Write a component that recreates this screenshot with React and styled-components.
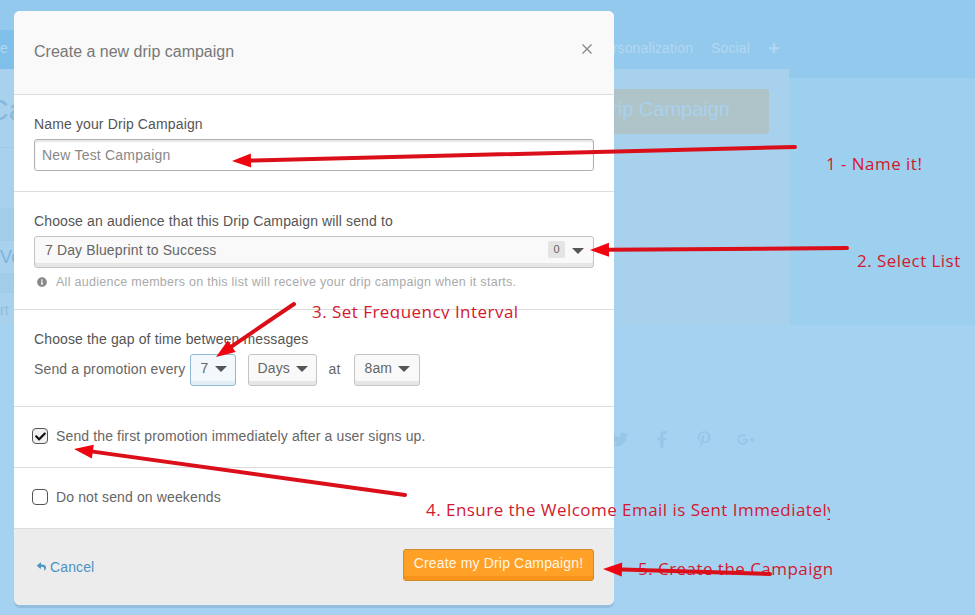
import React from "react";
import styled, { createGlobalStyle } from "styled-components";
import { FaTwitter, FaFacebookF, FaPinterestP, FaGooglePlusG, FaInfoCircle, FaReply, FaCheck, FaPlus } from "react-icons/fa";

const GlobalStyle = createGlobalStyle`
    html, body {
        margin: 0;
        padding: 0;
        background: #a5d2f1;
    }
    * {
        box-sizing: border-box;
    }
`

const Page = styled.div`
    width: 975px;
    height: 615px;
    position: relative;
    overflow: hidden;
    background: #a5d2f1;
    font-family: "Liberation Sans", Arial, sans-serif;
    font-size: 14px;
    letter-spacing: 0.13px;
    color: #555;
`

/* dimmed page behind the modal */
const TopBand = styled.div`
    height: 69px;
    background: #93c9ed;
    display: flex;
    align-items: flex-end;
    color: #b3d7f0;
`

const HomeTab = styled.div`
    width: 40px;
    height: 39px;
    background: #7fbfea;
    line-height: 36px;
`

const NavLinks = styled.div`
    margin-left: auto;
    width: 195px;
    height: 39px;
    margin-right: 195px;
    padding-bottom: 4px;
    display: flex;
    align-items: center;
    gap: 18px;
    white-space: nowrap;
    justify-content: flex-end;
`

const ContentRow = styled.div`
    display: flex;
    height: 256px;
`

const MainPanel = styled.div`
    width: 789px;
    background: #a8d1ed;
    overflow: hidden;
`

const PanelHead = styled.div`
    display: flex;
    justify-content: space-between;
    align-items: flex-start;
`

const TitleBlock = styled.div`
    width: 400px;
    height: 79px;
    border-bottom: 1px solid #9fcbe9;
    padding-top: 21px;
`

const PageTitle = styled.div`
    font-size: 30px;
    line-height: 40px;
    margin-left: -13px;
    color: #86b9de;
`

const GhostButton = styled.div`
    width: 400px;
    height: 45px;
    margin: 20px 20px 0 0;
    background: #afc4c8;
    border-radius: 3px;
    color: #a9d1ed;
    font-size: 20px;
    letter-spacing: 0;
    line-height: 41px;
    text-align: right;
    padding-right: 39px;
`

const TableHead = styled.div`
    width: 400px;
    height: 32px;
    margin-top: 60px;
    background: #a2cdea;
`

const TableRow = styled.div`
    width: 400px;
    height: ${props => props.$h}px;
    line-height: ${props => props.$h}px;
    border-top: 1px solid #9fcbe9;
    color: ${props => props.$c};
    font-size: ${props => props.$fs}px;
    background: ${props => props.$bg || "transparent"};
`

const RightRail = styled.div`
    flex: 1;
    background: #9dcfee;
    border-top: 9px solid #93c9ed;
`

const SocialRow = styled.div`
    display: flex;
    height: 30px;
    margin: 99px 0 0 611px;
    gap: 24px;
    font-size: 17px;
    color: #98c6e8;
    align-items: center;

    & svg {
        width: 18px;
    }
`

/* modal */
const Modal = styled.div`
    position: absolute;
    left: 14px;
    top: 11px;
    width: 600px;
    height: 594px;
    background: #fff;
    border-radius: 6px;
    box-shadow: 0 3px 0 #93bedd;
    overflow: hidden;
    display: flex;
    flex-direction: column;
`

const ModalHeader = styled.div`
    height: 84px;
    background: #f9f9f9;
    border-bottom: 1px solid #ddd;
    padding: 0 20px;
    display: flex;
    align-items: center;
    justify-content: space-between;
`

const ModalTitle = styled.div`
    font-size: 16px;
    letter-spacing: 0;
    color: #777;
    margin-bottom: 2px;
`

const CloseIcon = styled.svg`
    width: 10px;
    height: 10px;
    margin: 0 2px 8px 0;
    stroke: #888;
    stroke-width: 1.4;
`

const Section = styled.div`
    padding: ${props => props.$pad};
    border-bottom: 1px solid #ddd;
`

const CheckSection = styled.div`
    height: 61px;
    border-bottom: 1px solid #ddd;
    padding: 0 18px 2px;
    display: flex;
    align-items: center;
    gap: 8px;
    color: #666;
`

const Label = styled.div`
    line-height: 20px;
    margin-bottom: 5px;
    color: #555;
`

const TextInput = styled.input`
    display: block;
    width: 100%;
    height: 32px;
    border: 1px solid #b0b0b0;
    border-radius: 3px;
    box-shadow: inset 0 2px 2px rgba(0, 0, 0, 0.1);
    padding: 0 7px;
    font: 14px "Liberation Sans", Arial, sans-serif;
    letter-spacing: 0.2px;
    color: #888;
    outline: none;
`

const SelectBox = styled.div`
    height: 32px;
    width: ${props => props.$w ? props.$w + "px" : "100%"};
    margin-left: ${props => props.$ml || 0}px;
    border: 1px solid ${props => props.$active ? "#8fb8d4" : "#c4c4c4"};
    border-radius: 3px;
    background: ${props => props.$active ? "#f2f8fc" : "#f9f9f9"};
    box-shadow: inset 0 -4px 0 ${props => props.$active ? "#e3edf4" : "#e6e6e6"};
    display: flex;
    align-items: center;
    padding: 0 9px 5px ${props => props.$pad}px;
    gap: ${props => props.$gap || 7}px;
    color: #666;
    flex-shrink: 0;
`

const Count = styled.span`
    margin-left: auto;
    width: 17px;
    height: 17px;
    background: #e4e4e4;
    border-radius: 2px;
    font-size: 11px;
    line-height: 17px;
    text-align: center;
    color: #666;
`

const Caret = styled.span`
    width: 0;
    height: 0;
    border-left: 6px solid transparent;
    border-right: 6px solid transparent;
    border-top: 6px solid #555;
    margin-top: 2px;
`

const Hint = styled.div`
    display: flex;
    align-items: center;
    gap: 9px;
    margin: 4px 0 0 3px;
    line-height: 20px;
    font-size: 12.5px;
    letter-spacing: 0.28px;
    color: #aaa;

    & svg {
        color: #888;
        font-size: 10px;
    }
`

const GapRow = styled.div`
    display: flex;
    align-items: center;
    height: 32px;
    color: #666;
`

const RowText = styled.span`
    margin-bottom: 2px;
`

const AtLabel = styled(RowText)`
    width: 13px;
    margin: 0 12px 2px;
`

const Checkbox = styled.span`
    width: 16px;
    height: 16px;
    border: 1.5px solid #555;
    border-radius: 4px;
    background: ${props => props.$checked ? "#f0f0f0" : "#fff"};
    display: flex;
    align-items: center;
    justify-content: center;
    color: #111;
    font-size: 11px;
    flex-shrink: 0;
`

const Footer = styled.div`
    flex: 1;
    background: #ececec;
    display: flex;
    align-items: center;
    justify-content: space-between;
    padding: 0 20px 0 23px;
`

const CancelLink = styled.a`
    color: #4a93c4;
    display: flex;
    align-items: center;
    gap: 4px;

    & svg {
        font-size: 9px;
        margin-bottom: 2px;
    }
`

const CreateButton = styled.button`
    width: 191px;
    height: 32px;
    border: 1px solid #cf8a2a;
    border-radius: 3px;
    background: #ffa126;
    box-shadow: inset 0 -4px 0 #f7931a;
    color: #fff6e6;
    font: 14px "Liberation Sans", Arial, sans-serif;
    letter-spacing: 0.16px;
    padding: 0 0 5px;
    margin-bottom: 4px;
`

/* annotations on top of the screenshot */
const Note = styled.div`
    position: absolute;
    left: ${props => props.$x}px;
    top: ${props => props.$y}px;
    width: ${props => props.$w}px;
    height: ${props => props.$h || 26}px;
    overflow: hidden;
    white-space: nowrap;
    font-family: "Open Sans", sans-serif;
    font-size: 17px;
    line-height: 24px;
    letter-spacing: 0.46px;
    color: #d2192f;
`

const ArrowLayer = styled.svg`
    position: absolute;
    left: 0;
    top: 0;
    width: 975px;
    height: 615px;
    pointer-events: none;
`

const arrows = [
    [795, 147, 232, 161],
    [847, 248, 590, 250],
    [294, 304, 216, 357],
    [405, 495, 74, 449],
    [770, 574, 603, 569],
];

function Arrow({ from, to }) {
    // head is a triangle laid along the line direction
    const dx = from[0] - to[0];
    const dy = from[1] - to[1];
    const len = Math.hypot(dx, dy);
    const ux = dx / len;
    const uy = dy / len;
    const bx = to[0] + ux * 19;
    const by = to[1] + uy * 19;
    const head = `${to[0]},${to[1]} ${bx - uy * 7},${by + ux * 7} ${bx + uy * 7},${by - ux * 7}`;

    return (
        <g>
            <line x1={from[0]} y1={from[1]} x2={bx} y2={by} stroke="#da0f1a" strokeWidth="4" strokeLinecap="round" />
            <polygon points={head} fill="#ee0510" />
        </g>
    );
}

export default function App() {
    return (
        <Page>
            <GlobalStyle />

            <TopBand>
                <HomeTab>e</HomeTab>
                <NavLinks>
                    <span>rsonalization</span>
                    <span>Social</span>
                    <FaPlus size={12} />
                </NavLinks>
            </TopBand>
            <ContentRow>
                <MainPanel>
                    <PanelHead>
                        <TitleBlock>
                            <PageTitle>Ca</PageTitle>
                        </TitleBlock>
                        <GhostButton>rip Campaign</GhostButton>
                    </PanelHead>
                    <TableHead />
                    <TableRow $h={33} $c="#7db3de" $fs={18}>Ve</TableRow>
                    <TableRow $h={19} $c="#8dbde0" $fs={14} $bg="#a2cdea" />
                    <TableRow $h={34} $c="#8dbde0" $fs={14}>rt</TableRow>
                </MainPanel>
                <RightRail />
            </ContentRow>
            <SocialRow>
                <FaTwitter />
                <FaFacebookF />
                <FaPinterestP />
                <FaGooglePlusG />
            </SocialRow>

            <Modal>
                <ModalHeader>
                    <ModalTitle>Create a new drip campaign</ModalTitle>
                    <CloseIcon viewBox="0 0 10 10">
                        <path d="M0.5 0.5 L9.5 9.5 M9.5 0.5 L0.5 9.5" />
                    </CloseIcon>
                </ModalHeader>

                <Section $pad="19px 20px 20px">
                    <Label>Name your Drip Campaign</Label>
                    <TextInput defaultValue="New Test Campaign" />
                </Section>

                <Section $pad="19px 20px 17px">
                    <Label>Choose an audience that this Drip Campaign will send to</Label>
                    <SelectBox $pad={10}>
                        7 Day Blueprint to Success
                        <Count>0</Count>
                        <Caret />
                    </SelectBox>
                    <Hint>
                        <FaInfoCircle />
                        All audience members on this list will receive your drip campaign when it starts.
                    </Hint>
                </Section>

                <Section $pad="19px 20px 20px">
                    <Label>Choose the gap of time between messages</Label>
                    <GapRow>
                        <RowText>Send a promotion every</RowText>
                        <SelectBox $w={46} $active $pad={10} $ml={4}>7<Caret /></SelectBox>
                        <SelectBox $w={69} $pad={9} $gap={6} $ml={12}>Days<Caret /></SelectBox>
                        <AtLabel>at</AtLabel>
                        <SelectBox $w={66} $pad={10} $gap={6}>8am<Caret /></SelectBox>
                    </GapRow>
                </Section>

                <CheckSection>
                    <Checkbox $checked><FaCheck /></Checkbox>
                    Send the first promotion immediately after a user signs up.
                </CheckSection>
                <CheckSection>
                    <Checkbox />
                    Do not send on weekends
                </CheckSection>

                <Footer>
                    <CancelLink><FaReply />Cancel</CancelLink>
                    <CreateButton>Create my Drip Campaign!</CreateButton>
                </Footer>
            </Modal>

            <Note $x={826} $y={152} $w={120}>1 - Name it!</Note>
            <Note $x={857} $y={249} $w={115}>2. Select List</Note>
            <Note $x={312} $y={300} $w={220} $h={19}>3. Set Frequency Interval</Note>
            <Note $x={426} $y={498} $w={404}>4. Ensure the Welcome Email is Sent Immediately</Note>
            <Note $x={638} $y={557} $w={200}>5. Create the Campaign</Note>

            <ArrowLayer viewBox="0 0 975 615">
                {arrows.map((a, i) => (
                    <Arrow key={i} from={[a[0], a[1]]} to={[a[2], a[3]]} />
                ))}
            </ArrowLayer>
        </Page>
    );
}
